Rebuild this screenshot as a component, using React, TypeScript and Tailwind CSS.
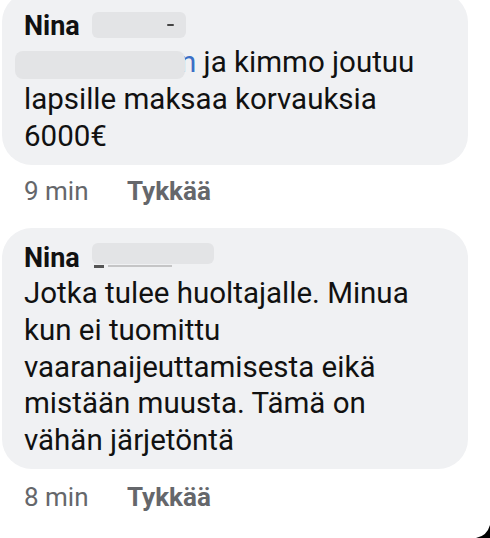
import React from "react";

const font = { fontFamily: "Roboto, 'Noto Sans', sans-serif" };

function Meta({ time }: { time: string }) {
  return (
    <div className="flex pl-[24px] text-[26px] leading-[30px] text-[#65676b]">
      <span className="w-[103px]">{time}</span>
      <span className="font-bold">Tykkää</span>
    </div>
  );
}

export default function App() {
  return (
    <div className="relative w-[490px] h-[538px] overflow-hidden bg-white text-[#111]" style={font}>
      <div className="flex flex-col">
        {/* Bubble 1 */}
        <div className="ml-[2px] mt-[-8px] w-[466px] rounded-[30px] bg-[#f0f1f3] pl-[22px] pr-4 pt-[19px] pb-[10px]">
          <div className="flex items-center h-[30px] gap-[12px]">
            <span className="text-[27px] font-bold leading-[30px]">Nina</span>
            <span className="flex items-center justify-end h-[26px] w-[94px] rounded-[6px] bg-[#e3e4e6] pr-[12px] mt-[-2px]">
              <span className="h-[2px] w-[7px] rounded-full bg-[#444]" />
            </span>
          </div>
          <div className="relative mt-[3px] text-[29.5px] leading-[37px]">
            <span className="absolute left-[-9px] top-[7px] h-[28px] w-[170px] rounded-[8px] bg-[#e3e4e6]" />
            <span className="inline-block w-[156px]" />
            <span className="text-[#3b6fc6]">n</span> ja kimmo joutuu
            <br />
            lapsille maksaa korvauksia
            <br />
            6000€
          </div>
        </div>
        <div className="h-[63px] pt-[11px]">
          <Meta time="9 min" />
        </div>
        {/* Bubble 2 */}
        <div className="ml-[2px] w-[466px] rounded-[30px] bg-[#f0f1f3] pl-[22px] pr-4 pt-[15px] pb-[10px]">
          <div className="flex items-start h-[30px] gap-[12px]">
            <span className="text-[27px] font-bold leading-[30px]">Nina</span>
            <span className="flex flex-col w-[122px]">
              <span className="h-[21px] w-[122px] rounded-[6px] bg-[#e3e4e6]" />
              <span className="flex gap-[4px] mt-[1px] ml-[2px]">
                <span className="h-[3px] w-[10px] bg-[#555]" />
                <span className="h-[2px] w-[64px] bg-[#9a9a9a] opacity-50" />
              </span>
            </span>
          </div>
          <div className="mt-[2px] text-[29.5px] leading-[36.75px]">
            Jotka tulee huoltajalle. Minua
            <br />
            kun ei tuomittu
            <br />
            vaaranaijeuttamisesta eikä
            <br />
            mistään muusta. Tämä on
            <br />
            vähän järjetöntä
          </div>
        </div>
        <div className="mt-[13px]">
          <Meta time="8 min" />
        </div>
      </div>
      <svg className="absolute right-0 bottom-0" width="14" height="13" viewBox="0 0 14 13">
        <path d="M14 0 L14 13 L0 13 Q11 11 14 0 Z" fill="#000" />
      </svg>
    </div>
  );
}
